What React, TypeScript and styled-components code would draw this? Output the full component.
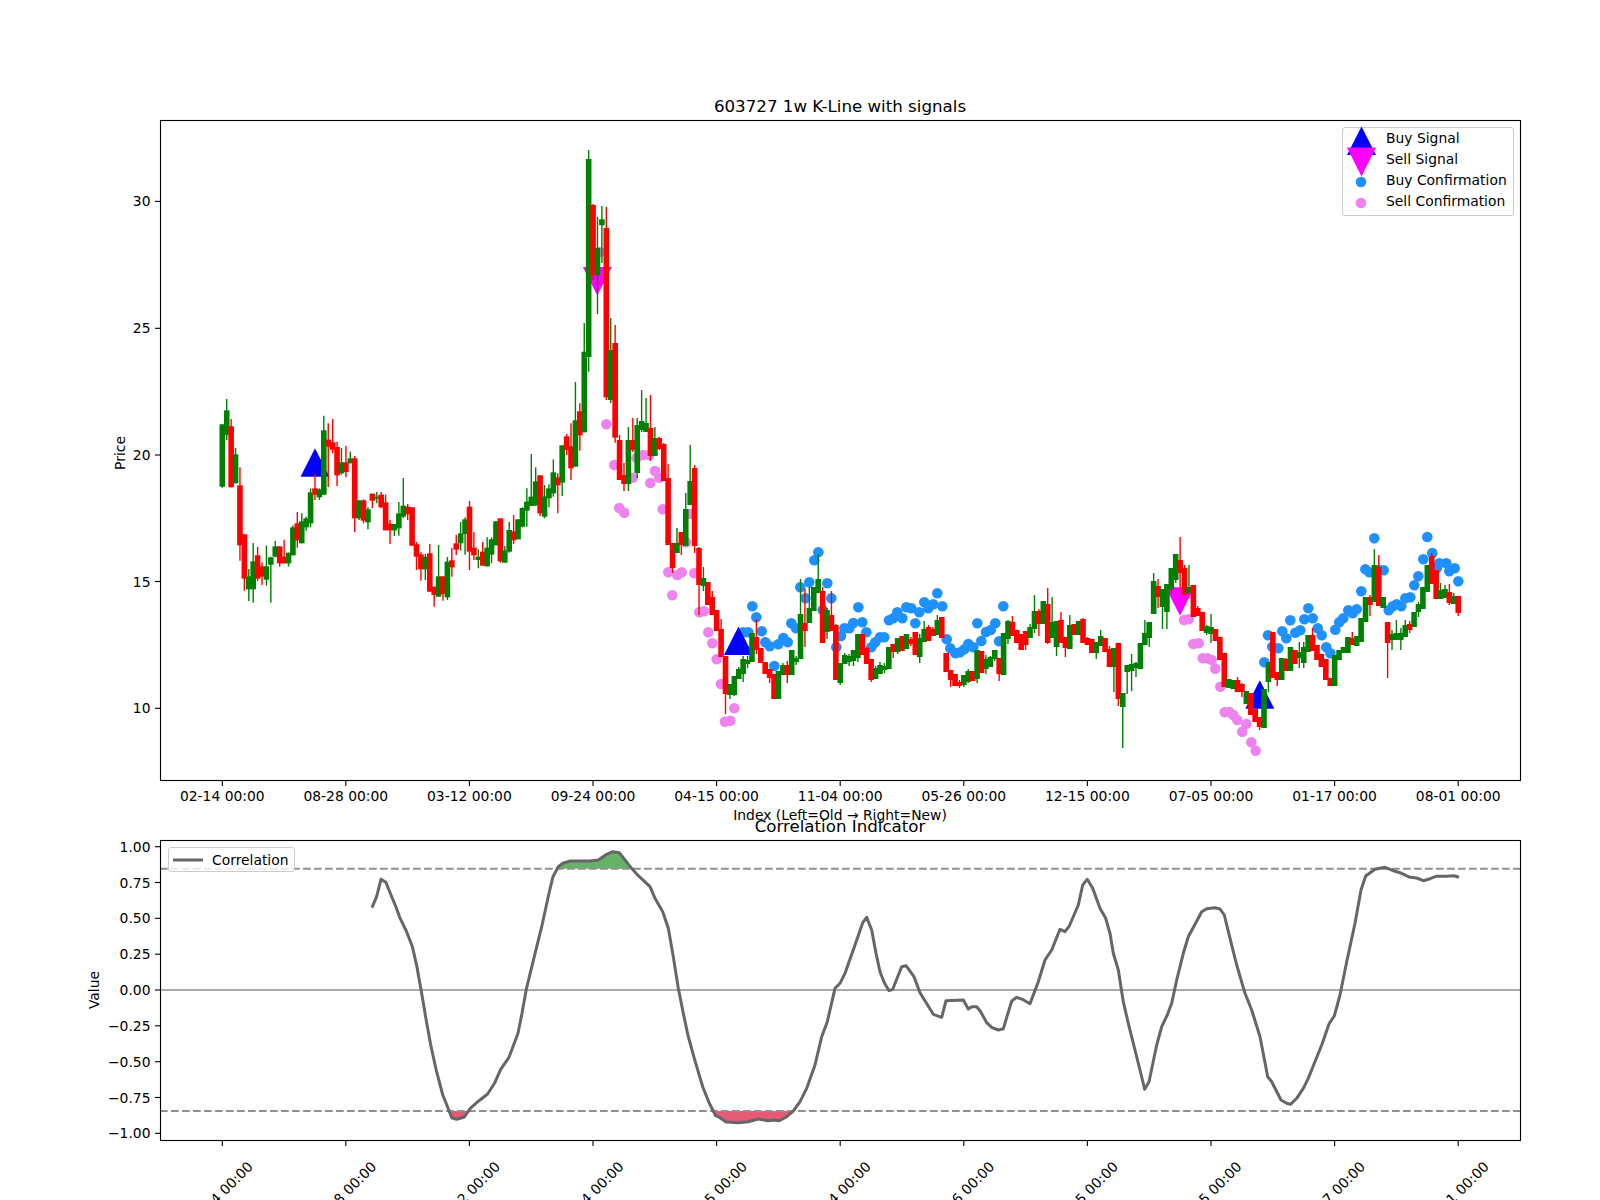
import styled, { createGlobalStyle } from 'styled-components';

const FONT = '"DejaVu Sans", Verdana, sans-serif';
const G = 'green';
const R = 'red';
const BLUE = 'dodgerblue';
const VIOLET = 'violet';

type Candle = [string, number, number, number, number];
type Point = [number, number];

// first stretch was read off a crop, so it is stored in crop units
const crop = (rows: Candle[]): Candle[] =>
  rows.map(([c, t, b, wt, wb]) => [c, 400 + t / 3, 400 + b / 3, 400 + wt / 3, 400 + wb / 3]);

const CANDLES: Candle[] = [
  ...crop([
    [G, 73, 260, 73, 263], [G, 31, 105, -3, 120], [R, 79, 262, 57, 262], [G, 163, 250, 144, 250],
    [R, 256, 436, 202, 482], [R, 403, 536, 403, 572], [G, 529, 568, 507, 603], [G, 484, 568, 429, 608],
    [R, 466, 536, 441, 543], [R, 499, 530, 487, 555], [G, 499, 539, 437, 557], [G, 472, 494, 470, 608],
    [G, 439, 470, 423, 472], [R, 439, 490, 439, 500], [R, 470, 490, 419, 490], [G, 458, 490, 458, 500],
    [G, 382, 466, 376, 466], [R, 370, 421, 336, 443], [G, 364, 430, 340, 430], [G, 355, 382, 350, 392],
    [G, 277, 370, 265, 382], [R, 265, 284, 222, 300], [G, 268, 292, 265, 300], [G, 91, 284, 47, 284],
    [R, 119, 140, 70, 261], [R, 127, 149, 57, 160], [R, 141, 226, 125, 258], [G, 187, 220, 144, 224],
    [R, 187, 216, 137, 232], [G, 175, 190, 155, 190], [R, 175, 355, 168, 396], [G, 301, 355, 301, 360],
    [R, 301, 362, 298, 370], [G, 328, 367, 322, 388], [R, 281, 302, 281, 324], [G, 290, 296, 276, 310],
    [R, 284, 322, 276, 325], [R, 307, 391, 284, 391], [R, 371, 391, 360, 432], [G, 372, 391, 372, 408],
    [G, 340, 385, 306, 407], [G, 317, 350, 234, 354], [R, 320, 343, 312, 360], [R, 322, 437, 322, 437],
    [R, 433, 470, 426, 510], [R, 463, 508, 457, 542], [G, 470, 508, 462, 540], [R, 460, 575, 432, 575],
    [R, 560, 585, 560, 620], [G, 529, 590, 435, 590], [R, 529, 582, 529, 602], [G, 485, 592, 471, 600],
    [R, 481, 502, 444, 530], [R, 430, 449, 404, 465], [G, 400, 430, 366, 452], [G, 358, 402, 352, 464],
    [R, 320, 455, 303, 510], [R, 443, 466, 396, 480], [G, 470, 480, 448, 505], [R, 455, 497, 426, 497],
    [G, 443, 499, 412, 499], [G, 418, 464, 412, 490], [G, 364, 436, 364, 436], [R, 355, 484, 355, 488],
    [G, 451, 488, 438, 488], [G, 390, 455, 366, 458], [R, 394, 421, 345, 432], [G, 358, 418, 358, 418],
    [G, 324, 380, 322, 382], [G, 305, 332, 265, 380], [G, 290, 318, 162, 318], [G, 244, 316, 202, 318],
    [R, 226, 340, 226, 348], [G, 289, 350, 255, 355], [G, 265, 295, 253, 322], [G, 217, 280, 178, 290],
    [R, 232, 256, 220, 340], [G, 136, 248, 136, 288], [R, 109, 150, 102, 165], [R, 139, 205, 70, 240],
    [G, 61, 200, -54, 200], [R, 34, 106, 10, 152],
  ]),
  [G, 351.7, 432.3, 323, 432.3], [G, 159, 357, 150, 371.7], [R, 205, 275, 204, 280], [G, 248, 275, 216.7, 314],
  [G, 219.3, 225.3, 206, 263], [R, 228, 397.3, 207, 400], [G, 350, 400, 318, 403], [R, 343, 437.7, 325, 442.7],
  [R, 440, 480, 435, 480], [R, 475, 484, 463, 491], [G, 440, 484, 427, 491], [R, 440, 450, 418, 452],
  [G, 425, 473, 418, 478], [G, 421, 430, 390, 432], [G, 423, 432, 398, 432], [R, 428, 456, 395, 461],
  [G, 438, 456, 427, 456], [R, 438, 449, 437, 450], [R, 444, 481, 443, 481], [R, 478, 545, 464, 545],
  [R, 543, 568, 543, 573], [G, 543, 553, 528, 553], [R, 532, 545, 532, 555], [G, 509, 546, 493, 546],
  [G, 481, 505, 445, 505], [R, 468, 546, 465, 553], [R, 548, 585, 547, 615], [G, 578, 586, 567, 591],
  [R, 582, 605, 582, 605], [R, 597, 615, 591, 615], [R, 610, 631, 610, 631], [R, 629, 657, 619, 657],
  [R, 656, 694, 656, 714], [G, 684, 695, 684, 699], [G, 676, 695, 676, 696], [G, 669, 679, 667, 679],
  [G, 659, 674, 656, 682], [G, 660, 664, 656, 668], [G, 633, 662, 633, 662], [R, 637, 650, 619, 654],
  [R, 648, 663, 648, 663], [R, 662, 674, 662, 674], [R, 669, 678, 669, 683], [R, 674, 699, 674, 699],
  [G, 671, 699, 671, 699], [G, 665, 675, 663, 675], [R, 665, 675, 661, 683], [G, 650, 675, 650, 675],
  [G, 658, 662, 656, 665], [G, 614, 659, 579, 659], [R, 623, 631, 589, 647], [G, 608, 623, 587, 623],
  [G, 587, 611, 587, 611], [G, 579, 593, 554, 593], [R, 591, 643, 587, 643], [G, 610, 632, 608, 639],
  [R, 615, 631, 591, 631], [R, 625, 680, 624, 680], [G, 663, 683, 663, 685], [G, 655, 664, 653, 664],
  [G, 656, 662, 654, 666], [G, 650, 661, 650, 666], [G, 634, 658, 634, 662], [R, 634, 655, 634, 655],
  [R, 648, 664, 647, 664], [R, 659, 680, 659, 682], [G, 668, 679, 666, 679], [G, 665, 674, 662, 674],
  [G, 666, 670, 663, 673], [G, 647, 669, 647, 669], [R, 644, 652, 644, 658], [G, 638, 652, 638, 654],
  [R, 636, 651, 636, 651], [G, 634, 649, 634, 649], [R, 639, 644, 637, 646], [R, 632, 655, 632, 655],
  [G, 638, 657, 634, 663], [G, 629, 642, 621, 642], [R, 627, 641, 625, 641], [R, 629, 636, 627, 636],
  [G, 620, 635, 615, 635], [R, 617, 638, 617, 638], [R, 653, 672, 653, 672], [R, 670, 680, 670, 687],
  [R, 674, 686, 674, 686], [R, 682, 686, 680, 688], [G, 675, 685, 675, 687], [G, 671, 682, 669, 683],
  [R, 671, 681, 671, 681], [G, 650, 679, 650, 683], [R, 651, 673, 651, 673], [G, 659, 669, 655, 674],
  [G, 657, 667, 656, 667], [G, 650, 659, 650, 661], [R, 658, 674, 658, 681], [G, 633, 675, 633, 675],
  [G, 621, 639, 620, 644], [R, 622, 636, 616, 636], [R, 630, 643, 630, 643], [R, 634, 650, 634, 650],
  [R, 631, 645, 631, 650], [G, 627, 638, 624, 638], [G, 611, 629, 595, 633], [R, 611, 624, 609, 636],
  [G, 601, 624, 601, 624], [R, 604, 643, 588, 644], [G, 622, 638, 597, 638], [G, 621, 647, 621, 656],
  [R, 620, 643, 612, 643], [R, 637, 648, 637, 657], [G, 625, 649, 615, 649], [R, 624, 635, 624, 635],
  [G, 621, 635, 621, 635], [R, 619, 643, 618, 643], [R, 638, 645, 637, 645], [R, 639, 653, 639, 653],
  [G, 642, 653, 642, 659], [G, 636, 646, 630, 646], [R, 638, 652, 638, 652], [R, 649, 667, 646, 667],
  [G, 648, 667, 648, 692], [R, 643, 699, 643, 706], [G, 693, 707, 693, 748], [G, 665, 672, 665, 694],
  [G, 664, 671, 654, 691], [G, 663, 668, 662, 677], [G, 643, 669, 643, 669], [G, 633, 645, 620, 645],
  [G, 622, 638, 622, 647], [G, 581, 614, 573, 614], [R, 586, 597, 579, 608], [G, 589, 607, 589, 629],
  [G, 584, 612, 584, 629], [G, 568, 589, 568, 593], [G, 554, 580, 554, 583], [R, 560, 573, 537, 588],
  [R, 568, 595, 565, 595], [G, 587, 593, 565, 593], [R, 585, 617, 585, 617], [R, 608, 616, 606, 616],
  [R, 612, 631, 612, 631], [G, 626, 633, 625, 635], [G, 627, 634, 614, 643], [R, 629, 641, 629, 641],
  [R, 637, 660, 637, 660], [R, 653, 687, 653, 687], [G, 679, 688, 679, 688], [G, 680, 689, 680, 689],
  [R, 680, 692, 677, 692], [R, 684, 692, 683, 697], [G, 691, 704, 691, 704], [R, 693, 715, 693, 715],
  [R, 709, 722, 709, 722], [R, 717, 727, 717, 730], [G, 689, 728, 689, 728], [G, 662, 682, 662, 692],
  [R, 632, 678, 632, 678], [R, 672, 680, 672, 686], [G, 658, 680, 658, 680], [R, 659, 671, 658, 671],
  [G, 647, 671, 647, 671], [R, 650, 664, 650, 664], [G, 652, 658, 642, 668], [G, 647, 663, 642, 668],
  [G, 635, 652, 635, 652], [R, 635, 651, 628, 651], [R, 645, 660, 645, 660], [R, 654, 667, 654, 667],
  [R, 659, 680, 659, 680], [R, 678, 686, 678, 686], [G, 655, 686, 655, 686], [G, 650, 660, 650, 660],
  [G, 647, 653, 647, 653], [G, 637, 653, 637, 653], [R, 638, 645, 632, 645], [G, 636, 646, 636, 646],
  [G, 618, 642, 618, 642], [G, 597, 622, 597, 622], [R, 597, 605, 595, 616], [G, 565, 602, 549, 602],
  [R, 567, 606, 555, 606], [G, 597, 608, 597, 608], [R, 622, 643, 622, 678], [G, 634, 640, 630, 650],
  [G, 633, 640, 620, 640], [G, 633, 640, 628, 650], [G, 625, 637, 620, 637], [R, 624, 630, 621, 633],
  [G, 612, 627, 612, 627], [G, 604, 612, 602, 617], [G, 587, 609, 587, 609], [G, 565, 592, 565, 592],
  [R, 556, 584, 553, 584], [R, 570, 599, 570, 599], [G, 590, 599, 583, 599], [G, 589, 598, 585, 598],
  [R, 592, 603, 584, 605], [G, 596, 604, 593, 604], [R, 596, 613, 596, 616],
];

const VIOLET_DOTS: Point[] = [
  [600, 252], [606.3, 424.3], [614.3, 465], [632.7, 477.7], [619.3, 508], [624.3, 512.7], [636.7, 458], [643.3, 455],
  [649.3, 455], [655, 471], [659.3, 477.7], [650.3, 483], [662.7, 509.3], [668.3, 572.3], [677.3, 575], [681.7, 572.3],
  [672.3, 595.3], [686, 542.3], [690, 514], [694.3, 573.3], [699.3, 612.3], [704, 611.3], [708.3, 632.3], [712.3, 643.3],
  [716.7, 659.3], [721, 684], [734.3, 708.3], [725, 721.7], [730.3, 720.7], [1184, 620], [1188.7, 619.3], [1193.3, 644],
  [1198.7, 643.3], [1202.7, 658.3], [1207.3, 658.3], [1211.7, 660], [1215.3, 668.7], [1220.3, 686.7], [1224.7, 712.3],
  [1229.3, 712], [1233.3, 715], [1237.3, 720], [1246.3, 724], [1242.3, 731.7], [1251.3, 742.3], [1255.7, 750.7],
];

const BLUE_DOTS: Point[] = [
  [743.3, 632.3], [748.3, 632.3], [752.3, 606.3], [756.3, 617.3], [761.7, 631.3], [765.3, 642.3], [769.7, 646.3],
  [774.3, 666], [778.3, 644.3], [783.3, 638], [787.7, 642.3], [791.3, 623.3], [796, 628.3], [800.3, 587.3], [805.3, 598.3],
  [809.3, 582.3], [814.3, 560.3], [818.3, 552.3], [822.7, 610], [827.3, 583.3], [831.3, 598.3], [836.3, 647.3], [841, 636],
  [844.3, 628.3], [849.3, 628.3], [853.3, 623], [858.3, 607.3], [862.3, 622.3], [866.3, 632.3], [871.3, 647.3],
  [875.3, 642.3], [880, 637.3], [884.3, 637.3], [889, 620.3], [893.3, 618.3], [897.3, 612.3], [902.3, 618.3], [906.3, 607.3],
  [911.3, 608.3], [915.3, 623.3], [919.3, 612.3], [924.3, 602.3], [928.3, 608.3], [933.3, 604.3], [937.3, 593.3],
  [942.3, 606.3], [946.7, 639.3], [950.3, 648.3], [955.3, 653.3], [960, 652.3], [964.3, 649.3], [968.3, 644], [973.3, 647.3],
  [977.3, 623.3], [981.3, 641], [986, 632], [990.7, 630], [995.3, 623.3], [999, 641.3], [1003.3, 606.3],
  [1264.3, 662.3], [1268, 635.3], [1272.3, 646.7], [1278.3, 648.3], [1282.3, 631.3], [1286.3, 638.3], [1290.3, 620.3],
  [1295.3, 632.7], [1300.3, 630.3], [1304.3, 619.3], [1308.3, 608.3], [1312.7, 618.3], [1317.7, 628.3], [1321.7, 635.3],
  [1326.3, 647.3], [1330.3, 653.3], [1335.3, 629.7], [1339.3, 622.3], [1343.3, 618.3], [1348.3, 610.3], [1352.7, 613.3],
  [1356.7, 609.3], [1361.3, 591.3], [1365.3, 569.3], [1369.3, 572.3], [1374.3, 538.3], [1379, 570], [1383.7, 570.3],
  [1388.7, 610.3], [1392.7, 606.3], [1396.7, 604.3], [1401.3, 606.3], [1405.3, 598.3], [1410.3, 597.3], [1414.3, 585.3],
  [1418.3, 576.3], [1423.3, 559.3], [1427.3, 537], [1432.3, 553], [1436.7, 568.3], [1439.3, 563.3], [1446.3, 563.3],
  [1449.3, 571.3], [1454.7, 568.3], [1458.3, 581.3],
];

const CORRELATION: Point[] = [
  [372, 907.7], [376.6, 896.7], [381, 879.3], [385.9, 882.3], [391, 895], [396, 907], [399.7, 917.3], [406.6, 931.7],
  [412.4, 946.7], [416.9, 966.7], [421.4, 991.7], [426.2, 1020], [430.7, 1045], [436.6, 1071.7], [442.8, 1095], [448, 1108],
  [451.7, 1117.7], [456.6, 1119.3], [464, 1117.3], [470.3, 1108.3], [479, 1100.7], [487.6, 1094], [494.5, 1083.3],
  [500.7, 1069.3], [509, 1057.3], [518, 1033.3], [522, 1013.3], [526.5, 988.3], [535.9, 950], [541.7, 926.7], [549, 893.3],
  [553, 876.7], [558.3, 866.7], [562.8, 863.3], [570.3, 861], [590, 861], [598.3, 860], [606.7, 854.3], [612.7, 851.7],
  [619.3, 852.7], [625, 860], [630.7, 867.3], [638.3, 875.7], [650, 886.7], [655, 898.3], [662.7, 911.7], [668.3, 928.3],
  [673.3, 956.7], [678.3, 988.3], [683.3, 1013.3], [688.3, 1036.7], [694.3, 1058.3], [702.7, 1086.7], [709.3, 1103.3],
  [715.7, 1115.7], [720, 1117.7], [726, 1122], [738.3, 1122.7], [748.3, 1121.7], [758.3, 1119], [768.3, 1120.7],
  [773.3, 1120], [779.3, 1120.7], [786.7, 1116.7], [793.3, 1111], [800, 1101.7], [806.7, 1088.3], [815, 1065],
  [821.7, 1036.7], [827.3, 1021.7], [835, 988.3], [840, 983.3], [845, 973.3], [855, 945], [862.7, 922.7], [866.7, 917.3],
  [871.7, 930], [876, 953.3], [880, 971.7], [884.3, 982.7], [889, 990.7], [892.7, 989.3], [901.7, 966.7], [906, 965.7],
  [914, 976.7], [920, 992.7], [933.3, 1014.3], [941.7, 1017.3], [946, 1000.7], [963.3, 1000], [968.3, 1009], [971.7, 1006.7],
  [976.7, 1006.7], [980.7, 1011.7], [986.7, 1022.7], [991.7, 1027.3], [998.3, 1030], [1003.3, 1028.7], [1011.7, 1001],
  [1016.7, 997.3], [1022.3, 999.3], [1030, 1003.7], [1038.3, 981.7], [1045, 960], [1051.7, 950], [1060, 929.3],
  [1065, 931.7], [1069.3, 926], [1078.3, 905], [1082.7, 885], [1087.3, 879.3], [1092.7, 888.3], [1100, 908.3],
  [1105.7, 918.3], [1110, 933.3], [1113.3, 953.3], [1118.3, 970], [1123.3, 1001.7], [1128.3, 1023.3], [1140, 1070],
  [1144.7, 1089.3], [1149, 1081.7], [1156.7, 1045], [1161.7, 1026.7], [1167.3, 1015], [1171.7, 1003.3], [1176.7, 980],
  [1183.3, 953.3], [1188.3, 936.7], [1201.7, 911.7], [1206.7, 908.7], [1215, 907.7], [1220, 909], [1224.3, 915],
  [1230, 938.3], [1236.7, 965], [1245, 993.3], [1251.7, 1010], [1260, 1036.7], [1267.7, 1076.7], [1271.7, 1081.7],
  [1281, 1100], [1286.7, 1103.3], [1290.7, 1104.3], [1296.7, 1098.3], [1303.3, 1088.3], [1308.3, 1078.3], [1321.7, 1045],
  [1329.3, 1023.3], [1334.3, 1016], [1340, 995], [1346.7, 961.7], [1355, 923.3], [1361, 890], [1365.7, 876], [1375, 869.3],
  [1385, 867.3], [1393.3, 870.7], [1400, 872.7], [1410, 877.3], [1416.7, 878], [1423.3, 880.7], [1430, 878.7],
  [1436, 876.3], [1446.7, 876.3], [1454, 875.7], [1459, 877.3],
];

const DATE_TICKS: [number, string][] = [
  [222.3, '02-14 00:00'], [345.8, '08-28 00:00'], [469.4, '03-12 00:00'], [593, '09-24 00:00'], [716.6, '04-15 00:00'],
  [840.2, '11-04 00:00'], [963.8, '05-26 00:00'], [1087.4, '12-15 00:00'], [1211, '07-05 00:00'], [1334.6, '01-17 00:00'],
  [1458.2, '08-01 00:00'],
];
const PRICE_TICKS: [number, string][] = [[201.4, '30'], [328.3, '25'], [455, '20'], [581.5, '15'], [708.3, '10']];
const VALUE_TICKS: [number, string][] = [
  [846.7, '1.00'], [882.5, '0.75'], [918.3, '0.50'], [954.2, '0.25'], [990, '0.00'],
  [1025.8, '\u22120.25'], [1061.7, '\u22120.50'], [1097.5, '\u22120.75'], [1133.3, '\u22121.00'],
];

const GlobalStyle = createGlobalStyle`
  html, body {
    margin: 0;
    padding: 0;
    background: #fff;
  }
`;

const Figure = styled.main`
  width: 1600px;
  height: 1200px;
  overflow: hidden;
  background: #fff;
  color: #000;
  font-family: ${FONT};
  display: flex;
  flex-direction: column;
`;

const Panel = styled.section`
  position: relative;
  flex: none;
`;

const Title = styled.h2<{ $height: number }>`
  margin: 0;
  height: ${(p) => p.$height}px;
  padding: 0 80px 3.5px 160px;
  width: 1360px;
  box-sizing: content-box;
  display: flex;
  align-items: flex-end;
  justify-content: center;
  font-size: 16.67px;
  font-weight: 400;
  line-height: 20px;
  white-space: nowrap;
  position: relative;
  z-index: 1;
`;

const Chart = styled.svg`
  display: block;
  overflow: visible;
`;

const Label = styled.text`
  font-family: ${FONT};
  font-size: 13.89px;
  fill: #000;
`;

const Frame = styled.rect`
  fill: none;
  stroke: #000;
  stroke-width: 1.11px;
`;

const Tick = styled.line`
  stroke: #000;
  stroke-width: 1.11px;
`;

const Wick = styled.line<{ $color: string }>`
  stroke: ${(p) => p.$color};
  stroke-width: 1.4px;
`;

const Body = styled.rect<{ $color: string }>`
  fill: ${(p) => p.$color};
`;

const Dot = styled.circle<{ $color: string }>`
  fill: ${(p) => p.$color};
`;

const Signal = styled.polygon<{ $color: string }>`
  fill: ${(p) => p.$color};
`;

const Level = styled.line<{ $dashed?: boolean }>`
  stroke: ${(p) => (p.$dashed ? '#909090' : '#aaaaaa')};
  stroke-width: 2px;
  stroke-dasharray: ${(p) => (p.$dashed ? '7.7 3.3' : 'none')};
`;

const Area = styled.polygon<{ $color: string; $alpha: number }>`
  fill: ${(p) => p.$color};
  fill-opacity: ${(p) => p.$alpha};
`;

const Curve = styled.polyline`
  fill: none;
  stroke: #666;
  stroke-width: 3px;
  stroke-linejoin: round;
`;

const Legend = styled.div<{ $top: number; $left: number; $width: number; $pad: number }>`
  position: absolute;
  top: ${(p) => p.$top}px;
  left: ${(p) => p.$left}px;
  width: ${(p) => p.$width}px;
  box-sizing: border-box;
  background: rgba(255, 255, 255, 0.8);
  border: 1px solid #ccc;
  border-radius: 3px;
  font-size: 13.89px;
  padding-bottom: ${(p) => p.$pad}px;
`;

const LegendRow = styled.div<{ $height: number }>`
  display: flex;
  align-items: center;
  height: ${(p) => p.$height}px;
  white-space: nowrap;
`;

const Swatch = styled.span`
  flex: none;
  width: 38px;
  display: flex;
  justify-content: center;
`;

const SwatchArt = styled.svg`
  display: block;
  overflow: visible;
`;

const LegendLabel = styled.span`
  margin-left: 5px;
`;

const up = (x: number, base: number) => `${x},${base - 28.5} ${x + 14.5},${base} ${x - 14.5},${base}`;
const down = (x: number, top: number) => `${x},${top + 28.5} ${x + 14.5},${top} ${x - 14.5},${top}`;

// polygon between the curve and a threshold line, for one x range
const areaPoints = (from: number, to: number, level: number) => {
  const part = CORRELATION.filter(([x]) => x >= from && x <= to);
  return [[from, level], ...part, [to, level]].map(([x, y]) => `${x},${y}`).join(' ');
};

const Candles = () => (
  <g>
    {CANDLES.map(([color, top, bottom, wickTop, wickBottom], i) => {
      const x = 222.3 + 4.414 * i;
      return (
        <g key={i}>
          <Wick $color={color} x1={x} x2={x} y1={wickTop} y2={wickBottom} />
          <Body $color={color} x={x - 2.8} y={top} width={5.6} height={bottom - top} />
        </g>
      );
    })}
  </g>
);

const PriceChart = () => (
  <Chart width={1600} height={705} viewBox="0 120 1600 705">
    {VIOLET_DOTS.map(([x, y], i) => (
      <Dot key={i} $color={VIOLET} cx={x} cy={y} r={5.3} />
    ))}
    {BLUE_DOTS.map(([x, y], i) => (
      <Dot key={i} $color={BLUE} cx={x} cy={y} r={5.3} />
    ))}
    <Signal $color="blue" points={up(315, 476.7)} />
    <Signal $color="blue" points={up(738.5, 655)} />
    <Signal $color="blue" points={up(1259.8, 708.7)} />
    <Signal $color="magenta" points={down(597.3, 267)} />
    <Signal $color="magenta" points={down(1180, 587.3)} />
    <Candles />
    <Frame x={160.5} y={120.5} width={1360} height={660} />
    {DATE_TICKS.map(([x, text]) => (
      <g key={text}>
        <Tick x1={x} x2={x} y1={781} y2={786} />
        <Label x={x} y={801} textAnchor="middle">
          {text}
        </Label>
      </g>
    ))}
    {PRICE_TICKS.map(([y, text]) => (
      <g key={text}>
        <Tick x1={155} x2={160} y1={y} y2={y} />
        <Label x={150.5} y={y + 5} textAnchor="end">
          {text}
        </Label>
      </g>
    ))}
    <Label x={840} y={820} textAnchor="middle">
      Index (Left=Old → Right=New)
    </Label>
    <Label transform="translate(125 453) rotate(-90)" textAnchor="middle">
      Price
    </Label>
  </Chart>
);

const CorrelationChart = () => (
  <Chart width={1600} height={360} viewBox="0 840 1600 360">
    <Area $color="green" $alpha={0.6} points={areaPoints(556, 630, 868.7)} />
    <Area $color="crimson" $alpha={0.7} points={areaPoints(449, 468, 1111)} />
    <Area $color="crimson" $alpha={0.7} points={areaPoints(715, 793.3, 1111)} />
    <Level x1={160} x2={1520} y1={990} y2={990} />
    <Level $dashed x1={160} x2={1520} y1={868.7} y2={868.7} />
    <Level $dashed x1={160} x2={1520} y1={1111} y2={1111} />
    <Curve points={CORRELATION.map(([x, y]) => `${x},${y}`).join(' ')} />
    <Frame x={160.5} y={840.5} width={1360} height={300} />
    {DATE_TICKS.map(([x, text]) => (
      <g key={text}>
        <Tick x1={x} x2={x} y1={1141} y2={1146} />
        <Label transform={`translate(${x - 2} 1194) rotate(-45)`} textAnchor="middle" dominantBaseline="central">
          {text}
        </Label>
      </g>
    ))}
    {VALUE_TICKS.map(([y, text]) => (
      <g key={text}>
        <Tick x1={155} x2={160} y1={y} y2={y} />
        <Label x={150.5} y={y + 5} textAnchor="end">
          {text}
        </Label>
      </g>
    ))}
    <Label transform="translate(99 990) rotate(-90)" textAnchor="middle">
      Value
    </Label>
  </Chart>
);

const PriceLegend = () => (
  <Legend $top={127} $left={1342} $width={172} $pad={3.5}>
    <LegendRow $height={20.8}>
      <Swatch>
        <SwatchArt width={30} height={20} viewBox="0 0 30 20">
          <Signal $color="blue" points="14.5,-1.6 29,27 0,27" />
        </SwatchArt>
      </Swatch>
      <LegendLabel>Buy Signal</LegendLabel>
    </LegendRow>
    <LegendRow $height={20.8}>
      <Swatch>
        <SwatchArt width={30} height={20} viewBox="0 0 30 20">
          <Signal $color="magenta" points="0,-1.4 29,-1.4 14.5,27.6" />
        </SwatchArt>
      </Swatch>
      <LegendLabel>Sell Signal</LegendLabel>
    </LegendRow>
    <LegendRow $height={20.8}>
      <Swatch>
        <SwatchArt width={30} height={20} viewBox="0 0 30 20">
          <Dot $color={BLUE} cx={14} cy={12} r={5.3} />
        </SwatchArt>
      </Swatch>
      <LegendLabel>Buy Confirmation</LegendLabel>
    </LegendRow>
    <LegendRow $height={20.8}>
      <Swatch>
        <SwatchArt width={30} height={20} viewBox="0 0 30 20">
          <Dot $color={VIOLET} cx={14} cy={12} r={5.3} />
        </SwatchArt>
      </Swatch>
      <LegendLabel>Sell Confirmation</LegendLabel>
    </LegendRow>
  </Legend>
);

const CorrelationLegend = () => (
  <Legend $top={22} $left={168} $width={127} $pad={0}>
    <LegendRow $height={23}>
      <Swatch>
        <SwatchArt width={30} height={4} viewBox="0 0 30 4">
          <line x1={0} x2={30} y1={2} y2={2} stroke="#666" strokeWidth={3} />
        </SwatchArt>
      </Swatch>
      <LegendLabel>Correlation</LegendLabel>
    </LegendRow>
  </Legend>
);

export default function App() {
  return (
    <>
      <GlobalStyle />
      <Figure>
        <Panel>
          <Title $height={116.5}>603727 1w K-Line with signals</Title>
          <PriceChart />
          <PriceLegend />
        </Panel>
        <Panel>
          <Title $height={11.5}>Correlation Indicator</Title>
          <CorrelationChart />
          <CorrelationLegend />
        </Panel>
      </Figure>
    </>
  );
}
